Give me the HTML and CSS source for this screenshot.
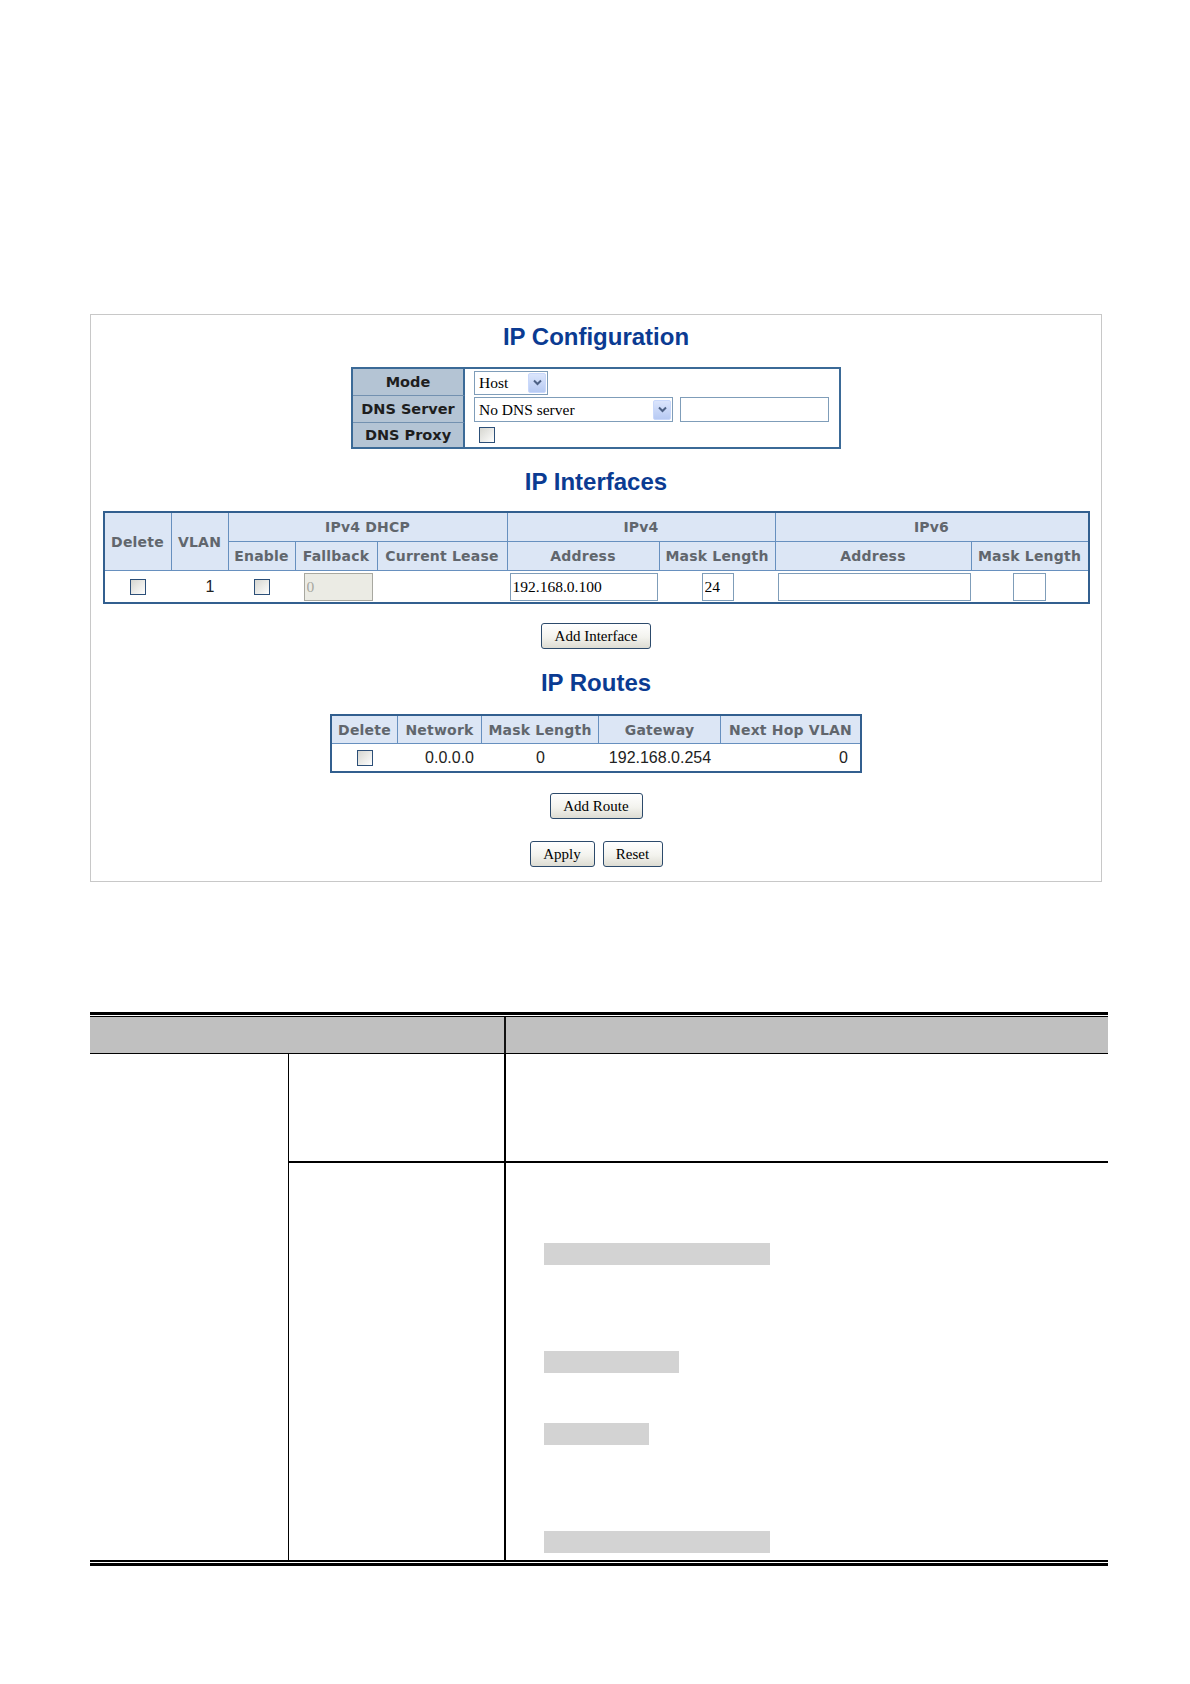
FILE: index.html
```html
<!DOCTYPE html>
<html lang="en">
<head>
<meta charset="utf-8">
<title>IP Configuration</title>
<link rel="stylesheet" href="styles.css">
</head>
<body>
<div class="page">
  <div class="frame">
    <h1 class="title t1">IP Configuration</h1>

    <div class="cfg">
      <div class="cfg-label sep">Mode</div>
      <div class="cfg-val">
        <div class="sel sel-mode"><span>Host</span><span class="sel-btn"><svg width="9" height="7" viewBox="0 0 9 7"><path d="M1 1.5 L4.5 5 L8 1.5" fill="none" stroke="#4d6185" stroke-width="2"/></svg></span></div>
      </div>
      <div class="cfg-label sep">DNS Server</div>
      <div class="cfg-val">
        <div class="sel sel-dns"><span>No DNS server</span><span class="sel-btn"><svg width="9" height="7" viewBox="0 0 9 7"><path d="M1 1.5 L4.5 5 L8 1.5" fill="none" stroke="#4d6185" stroke-width="2"/></svg></span></div>
        <input class="inp inp-dns" type="text" value="">
      </div>
      <div class="cfg-label">DNS Proxy</div>
      <div class="cfg-val">
        <span class="cb cb-proxy"></span>
      </div>
    </div>

    <h2 class="title t2">IP Interfaces</h2>

    <div class="tbl ifc">
      <div class="th rs2">Delete</div>
      <div class="th rs2">VLAN</div>
      <div class="th cs3">IPv4 DHCP</div>
      <div class="th cs2">IPv4</div>
      <div class="th cs2 last">IPv6</div>
      <div class="th">Enable</div>
      <div class="th">Fallback</div>
      <div class="th">Current Lease</div>
      <div class="th">Address</div>
      <div class="th">Mask Length</div>
      <div class="th">Address</div>
      <div class="th last">Mask Length</div>

      <div class="td center"><span class="cb"></span></div>
      <div class="td right pr14">1</div>
      <div class="td center"><span class="cb"></span></div>
      <div class="td pl8"><input class="inp inp-fb" type="text" value="0" disabled></div>
      <div class="td"></div>
      <div class="td pl2"><input class="inp inp-v4" type="text" value="192.168.0.100"></div>
      <div class="td center"><input class="inp inp-m4" type="text" value="24"></div>
      <div class="td pl2"><input class="inp inp-v6" type="text" value=""></div>
      <div class="td center"><input class="inp inp-m6" type="text" value=""></div>
    </div>

    <div class="btns b1"><button class="btn w-addif" type="button">Add Interface</button></div>

    <h2 class="title t3">IP Routes</h2>

    <div class="tbl rt">
      <div class="th">Delete</div>
      <div class="th">Network</div>
      <div class="th">Mask Length</div>
      <div class="th">Gateway</div>
      <div class="th last">Next Hop VLAN</div>

      <div class="td center"><span class="cb"></span></div>
      <div class="td right pr8">0.0.0.0</div>
      <div class="td center">0</div>
      <div class="td center">192.168.0.254</div>
      <div class="td right pr12">0</div>
    </div>

    <div class="btns b2"><button class="btn w-addrt" type="button">Add Route</button></div>
    <div class="btns b3">
      <button class="btn w-apply" type="button">Apply</button>
      <button class="btn w-reset" type="button">Reset</button>
    </div>
  </div>

  <div class="doc">
    <div class="rule-thick"></div>
    <div class="rule-thin"></div>
    <div class="doc-grid">
      <div class="dh dh1"></div>
      <div class="dh dh2"></div>
      <div class="c1"></div>
      <div class="c2 r1"></div>
      <div class="c3 r1"></div>
      <div class="c2"></div>
      <div class="c3 boxes">
        <div class="redact rd1"></div>
        <div class="redact rd2"></div>
        <div class="redact rd3"></div>
        <div class="redact rd4"></div>
      </div>
    </div>
    <div class="rule-thin2"></div>
    <div class="rule-thick2"></div>
  </div>
</div>
</body>
</html>
```

FILE: styles.css
```css
* { box-sizing: border-box; }

html, body {
  margin: 0;
  padding: 0;
  background: #fff;
}

body {
  width: 1190px;
  min-height: 1684px;
  font-family: "Liberation Sans", Arial, sans-serif;
  color: #000;
}

.page {
  padding: 314px 0 0 90px;
}

/* ---------- screenshot frame ---------- */
.frame {
  width: 1012px;
  height: 568px;
  border: 1px solid #c8c8c8;
  display: flex;
  flex-direction: column;
  align-items: center;
}

.title {
  margin: 0;
  font: bold 24px/28px "Liberation Sans", Arial, sans-serif;
  color: #0b3b92;
  text-align: center;
}
.t1 { margin-top: 8px; }
.t2 { margin-top: 19px; }
.t3 { margin-top: 20px; }

/* ---------- config table ---------- */
.cfg {
  margin-top: 16px;
  width: 490px;
  display: grid;
  grid-template-columns: 112px 1fr;
  grid-template-rows: 27px 27px 24px;
  border: 2px solid #3b6a97;
}

.cfg-label {
  background: #b4c4d4;
  border-right: 2px solid #3b6a97;
  display: flex;
  align-items: center;
  justify-content: center;
  font: bold 14.5px "DejaVu Sans", Verdana, sans-serif;
  color: #1e1e1e;
  white-space: nowrap;
}
.cfg-label.sep { border-bottom: 1px solid #7391b0; }

.cfg-val {
  display: flex;
  align-items: center;
  gap: 7px;
  padding-left: 9px;
}

.sel {
  display: flex;
  align-items: center;
  justify-content: space-between;
  height: 24px;
  border: 1px solid #7f9db9;
  background: #fff;
  padding: 0 1px 0 4px;
  font: 15.5px "Liberation Serif", "Times New Roman", serif;
  color: #000;
}
.sel-mode { width: 74px; }
.sel-dns { width: 199px; height: 25px; }

.sel-btn {
  width: 18px;
  height: 20px;
  background: linear-gradient(#dbe5fc, #b7caf3);
  border: 1px solid #c9d8fb;
  border-radius: 2px;
  display: flex;
  align-items: center;
  justify-content: center;
}

.inp {
  height: 28px;
  border: 1px solid #7f9db9;
  background: #fff;
  padding: 0 2px;
  margin: 0;
  font: 15.5px "Liberation Serif", "Times New Roman", serif;
  color: #000;
  outline: none;
}
.inp-dns { width: 149px; height: 25px; }
.inp-fb {
  width: 69px;
  background: #ebebe4;
  border-color: #a8a8a0;
  color: #a8a8a0;
}
.inp-v4 { width: 148px; }
.inp-m4 { width: 32px; }
.inp-v6 { width: 193px; }
.inp-m6 { width: 33px; }

.cb {
  display: inline-block;
  width: 16px;
  height: 16px;
  border: 1px solid #2c4f78;
  background: linear-gradient(135deg, #d6d6d0, #f4f4f2 75%, #ffffff);
}
.cb-proxy { margin-left: 5px; }

/* ---------- data tables ---------- */
.tbl {
  display: grid;
  border: 2px solid #325f8f;
}

.ifc {
  margin-top: 15px;
  width: 987px;
  grid-template-columns: 67px 57px 67px 82px 130px 152px 116px 196px 116px;
  grid-template-rows: 29px 29px 31px;
}

.rt {
  margin-top: 17px;
  width: 532px;
  grid-template-columns: 66px 84px 117px 122px 139px;
  grid-template-rows: 28px 27px;
}

.th {
  background: #dce6f5;
  border-right: 1px solid #6790bf;
  border-bottom: 1px solid #6790bf;
  display: flex;
  align-items: center;
  justify-content: center;
  font: bold 14px "DejaVu Sans", Verdana, sans-serif;
  letter-spacing: 0.2px;
  color: #61666d;
  white-space: nowrap;
}
.th.last { border-right: 0; }
.rs2 { grid-row: span 2; }
.cs2 { grid-column: span 2; }
.cs3 { grid-column: span 3; }

.td {
  display: flex;
  align-items: center;
  font: 16px "Liberation Sans", Arial, sans-serif;
  color: #222;
  white-space: nowrap;
}
.center { justify-content: center; }
.right { justify-content: flex-end; }
.pr8 { padding-right: 8px; }
.pr12 { padding-right: 12px; }
.pr14 { padding-right: 14px; }
.pl2 { padding-left: 2px; }
.pl8 { padding-left: 8px; }

/* ---------- buttons ---------- */
.btns {
  display: flex;
  gap: 8px;
  justify-content: center;
}
.b1 { margin-top: 19px; }
.b2 { margin-top: 20px; }
.b3 { margin-top: 22px; }

.btn {
  height: 26px;
  padding: 0;
  border: 1px solid #2c4a6b;
  border-radius: 3px;
  background: linear-gradient(#ffffff, #f3f3ee 55%, #dddcd3);
  font: 15px "Liberation Serif", "Times New Roman", serif;
  color: #000;
}
.w-addif { width: 110px; }
.w-addrt { width: 93px; }
.w-apply { width: 65px; }
.w-reset { width: 60px; }

/* ---------- document table ---------- */
.doc {
  margin-top: 130px;
  width: 1018px;
}

.rule-thick { height: 3px; background: #000; }
.rule-thin { height: 1px; background: #000; margin-top: 1px; }
.rule-thin2 { height: 2px; background: #000; }
.rule-thick2 { height: 3px; background: #000; margin-top: 1px; }

.doc-grid {
  display: grid;
  grid-template-columns: 198px 216px 604px;
  grid-template-rows: 37px 109px 397px;
}

.dh {
  background: #c0c0c0;
  border-bottom: 1px solid #000;
}
.dh1 { grid-column: span 2; }
.dh2 { border-left: 2px solid #111; }

.c1 { grid-row: span 2; }
.c2 { border-left: 1px solid #000; }
.c3 { border-left: 2px solid #000; }
.r1 { border-bottom: 2px solid #000; }

.boxes {
  display: flex;
  flex-direction: column;
  align-items: flex-start;
  padding-left: 38px;
}

.redact {
  height: 22px;
  background: #d3d3d3;
}
.rd1 { margin-top: 80px; width: 226px; }
.rd2 { margin-top: 86px; width: 135px; }
.rd3 { margin-top: 50px; width: 105px; }
.rd4 { margin-top: 86px; width: 226px; }
```
